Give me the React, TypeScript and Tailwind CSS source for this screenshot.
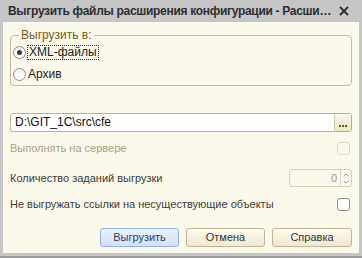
import { X, ChevronUp, ChevronDown } from "lucide-react";

export default function App() {
  return (
    <div className="w-[362px] h-[258px] bg-[#c6c6c6] flex flex-col font-['Liberation_Sans',Arial,sans-serif] text-[11px] text-[#3c3c3c] border-b-2 border-[#9a9a9a]">
      {/* Title bar */}
      <div className="h-[22px] flex items-center justify-between pl-[8px] pr-[11px] gap-1">
        <span className="text-[12px] font-bold text-[#2f2f2f] whitespace-nowrap tracking-[-0.3px]">
          Выгрузить файлы расширения конфигурации - Расши…
        </span>
        <X size={14} strokeWidth={3.2} className="shrink-0 text-[#333]" />
      </div>

      {/* Body */}
      <div className="flex-1 mx-[3px] mb-[3px] bg-[#fbf9eb] flex flex-col px-[7px] pt-[6px]">
        {/* Group box */}
        <fieldset className="border border-[#c9bc93] rounded-[4px] pl-[2px] pr-2 h-[58px]">
          <legend className="ml-[6px] px-[2px] text-[#7b5a1c] leading-[14px] text-[12px]">Выгрузить в:</legend>
          <div className="flex flex-col gap-[8px] mt-[3px]">
            <label className="flex items-center gap-[1px] h-[14px]">
              <span className="w-[13px] h-[13px] rounded-full border border-[#8c8c8c] bg-gradient-to-b from-[#f0f0f0] to-white flex items-center justify-center">
                <span className="w-[5px] h-[5px] rounded-full bg-[#3a3a3a]" />
              </span>
              <span className="border border-dotted border-[#333] px-[1px] leading-[13px] text-[12px] text-[#222]">XML-файлы</span>
            </label>
            <label className="flex items-center gap-[2px] h-[14px]">
              <span className="w-[13px] h-[13px] rounded-full border border-[#8c8c8c] bg-gradient-to-b from-[#f0f0f0] to-white" />
              <span className="text-[12px] text-[#222]">Архив</span>
            </label>
          </div>
        </fieldset>

        {/* Path input */}
        <div className="mt-[27px] h-[19px] flex border border-[#bdb08a] rounded-[3px] bg-white overflow-hidden">
          <span className="flex-1 pl-[4px] leading-[17px] text-[12px] text-[#111]">D:\GIT_1C\src\cfe</span>
          <span className="w-[17px] border-l border-[#cfc6a6] bg-gradient-to-b from-[#fbf8ea] to-[#ece5c8] flex items-end justify-center pb-[4px] gap-[1px]">
            <span className="w-[2px] h-[2px] bg-[#7a5a10]" />
            <span className="w-[2px] h-[2px] bg-[#7a5a10]" />
            <span className="w-[2px] h-[2px] bg-[#7a5a10]" />
          </span>
        </div>

        {/* Run on server (disabled) */}
        <div className="mt-[9px] h-[14px] flex items-center justify-between">
          <span className="text-[#aaa088]">Выполнять на сервере</span>
          <span className="w-[13px] h-[13px] mr-[2px] rounded-[3px] border border-[#dcd6c2] bg-[#fbf9eb]" />
        </div>

        {/* Job count */}
        <div className="mt-[14px] h-[18px] flex items-center justify-between">
          <span>Количество заданий выгрузки</span>
          <div className="w-[63px] h-[18px] flex border border-[#d8d0b4] rounded-[3px] bg-[#fbf9eb]">
            <span className="flex-1 text-right pr-[3px] leading-[16px] text-[#999]">0</span>
            <span className="w-[11px] border-l border-[#ddd6bd] flex flex-col items-center justify-center text-[#9a9a9a]">
              <ChevronUp size={8} strokeWidth={3} className="-mb-[1px]" />
              <ChevronDown size={8} strokeWidth={3} />
            </span>
          </div>
        </div>

        {/* Missing refs */}
        <div className="mt-[10px] h-[14px] flex items-center justify-between">
          <span>Не выгружать ссылки на несуществующие объекты</span>
          <span className="w-[13px] h-[13px] mr-[2px] rounded-[3px] border border-[#8d8d8d] bg-white" />
        </div>

        {/* Buttons */}
        <div className="mt-auto mb-[6px] flex justify-end gap-[7px]">
          <button className="w-[79px] h-[19px] rounded-[3px] border border-[#95b3df] bg-gradient-to-b from-[#e9f1fc] to-[#d2e1f6] text-[#2d3f66]">
            Выгрузить
          </button>
          <button className="w-[79px] h-[19px] rounded-[3px] border border-[#c3b78f] bg-gradient-to-b from-[#fdfbf1] to-[#efe8cf] text-[#333]">
            Отмена
          </button>
          <button className="w-[80px] h-[19px] rounded-[3px] border border-[#c3b78f] bg-gradient-to-b from-[#fdfbf1] to-[#efe8cf] text-[#333]">
            Справка
          </button>
        </div>
      </div>
    </div>
  );
}
